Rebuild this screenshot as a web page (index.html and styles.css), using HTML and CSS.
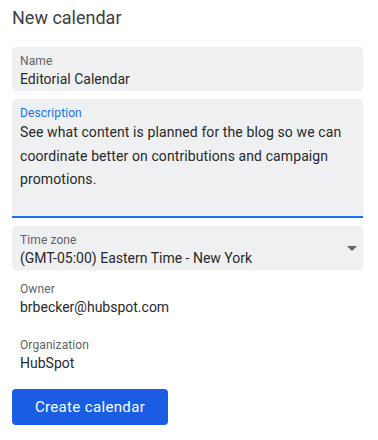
FILE: index.html
```html
<!DOCTYPE html>
<html lang="en">
<head>
    <meta charset="UTF-8">
    <meta name="viewport" content="width=device-width, initial-scale=1.0">
    <title>New calendar</title>
    <link rel="stylesheet" href="styles.css">
</head>
<body>
    <div class="panel">
        <h1 class="title">New calendar</h1>

        <div class="fields">
            <div class="field">
                <div class="field-label">Name</div>
                <div class="field-value">Editorial Calendar</div>
            </div>

            <!-- focused textarea -->
            <div class="field field-focused">
                <div class="field-label">Description</div>
                <div class="field-text">See what content is planned for the blog so we can coordinate better on contributions and campaign promotions.</div>
            </div>

            <div class="field field-select">
                <div>
                    <div class="field-label">Time zone</div>
                    <div class="field-value">(GMT-05:00) Eastern Time - New York</div>
                </div>
                <svg class="caret" width="10" height="5" viewBox="0 0 10 5"><path d="M0 0h10L5 5z" fill="#5f6368"/></svg>
            </div>
        </div>

        <div class="info">
            <div class="field-label">Owner</div>
            <div class="field-value">brbecker@hubspot.com</div>
        </div>
        <div class="info">
            <div class="field-label">Organization</div>
            <div class="field-value">HubSpot</div>
        </div>

        <button class="button">Create calendar</button>
    </div>
</body>
</html>
```

FILE: styles.css
```css
body {
    margin: 0;
    background: #fff;
    font-family: Roboto, "Noto Sans", Arial, sans-serif;
    color: #3c4043;
}
.panel {
    padding: 6px 15px 0 12px;
}
.title {
    margin: 0 0 17px;
    font-size: 18px;
    line-height: 24px;
    font-weight: 400;
    color: #3c4043;
}
.fields {
    display: flex;
    flex-direction: column;
    gap: 8px;
}
.field {
    background: #eff0f2;
    border-radius: 4px;
    padding: 6px 8px 2px;
    height: 44px;
    box-sizing: border-box;
}
.field-label {
    font-size: 12px;
    line-height: 16px;
    color: #5f6368;
    letter-spacing: 0.1px;
}
.field-value {
    font-size: 14px;
    line-height: 20px;
    color: #28292c;
}
.field-focused {
    height: auto;
    border-radius: 4px 4px 0 0;
    border-bottom: 2px solid #1a73e8;
    padding-bottom: 24px;
}
.field-focused .field-label {
    color: #1a73e8;
}
.field-text {
    font-size: 14px;
    line-height: 23.5px;
    color: #28292c;
    letter-spacing: 0.1px;
}
.field-select {
    display: flex;
    justify-content: space-between;
    align-items: center;
    padding-right: 6px;
}
.caret {
    margin-top: -2px;
}
.info {
    padding: 11px 8px 0;
    height: 44px;
}
.info + .info {
    margin-top: 1px;
}
.button {
    margin-top: 8px;
    width: 156px;
    height: 36px;
    border: none;
    border-radius: 4px;
    background: #1a5de3;
    color: #fff;
    font-family: Roboto, "Noto Sans", Arial, sans-serif;
    font-size: 15px;
    font-weight: 400;
    letter-spacing: 0.35px;
    cursor: pointer;
}
```
